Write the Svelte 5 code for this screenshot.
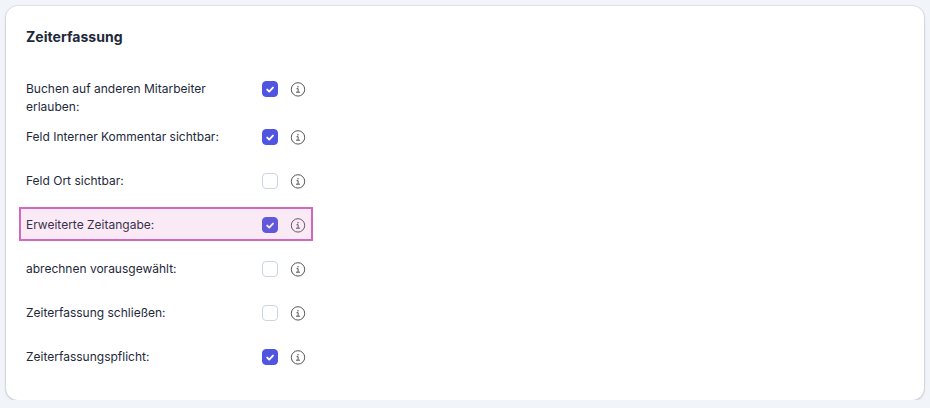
<script lang="ts">
	/**
	 * Settings card for time tracking ("Zeiterfassung")
	 */

	interface Setting {
		id: string;
		label: string;
		checked: boolean;
		highlighted?: boolean;
	}

	let settings = $state<Setting[]>([
		{ id: 'book-for-others', label: 'Buchen auf anderen Mitarbeiter erlauben:', checked: true },
		{ id: 'internal-comment', label: 'Feld Interner Kommentar sichtbar:', checked: true },
		{ id: 'location', label: 'Feld Ort sichtbar:', checked: false },
		{ id: 'extended-time', label: 'Erweiterte Zeitangabe:', checked: true, highlighted: true },
		{ id: 'billable', label: 'abrechnen vorausgewählt:', checked: false },
		{ id: 'close', label: 'Zeiterfassung schließen:', checked: false },
		{ id: 'required', label: 'Zeiterfassungspflicht:', checked: true }
	]);
</script>

<section class="card">
	<h2>Zeiterfassung</h2>

	{#each settings as setting (setting.id)}
		<div class="row" class:highlighted={setting.highlighted}>
			<label for={setting.id}>{setting.label}</label>
			<span class="checkbox">
				<input type="checkbox" id={setting.id} bind:checked={setting.checked} />
				{#if setting.checked}
					<svg class="check" viewBox="0 0 16 16" aria-hidden="true">
						<path d="M5.2 8.6l2 2L11 6.6" />
					</svg>
				{/if}
			</span>
			<svg class="info" viewBox="0 0 16 16" aria-hidden="true">
				<circle cx="8" cy="8.4" r="6.7" />
				<path d="M6.5 7.7h1.6v3.4M6 11.2h4" />
				<circle class="dot" cx="8" cy="5.8" r="0.75" />
			</svg>
		</div>
	{/each}
</section>

<style>
	:global(body) {
		background: #f1f5f9;
	}

	.card {
		box-sizing: border-box;
		height: 394px;
		margin: 6px 6px 0;
		padding: 21px 20px 0;
		background: #fff;
		border-radius: 12px;
		box-shadow:
			0 0 0 1px rgba(15, 23, 42, 0.06),
			0 1px 3px rgba(15, 23, 42, 0.18);
		color: #1e293b;
		font-family: Inter, sans-serif;
	}

	h2 {
		margin: 0 0 32px;
		font-size: 14px;
		font-weight: 700;
		line-height: 20px;
		letter-spacing: 0.03px;
	}

	.row {
		position: relative;
		display: flex;
		align-items: flex-start;
		min-height: 44px;
	}

	label {
		width: 200px;
		margin-right: 36px;
		padding: 1px 0 11px;
		font-size: 12px;
		line-height: 18px;
	}

	.checkbox {
		position: relative;
		width: 16px;
		height: 16px;
		margin: 2px 12px 0 0;
	}

	input {
		display: block;
		width: 16px;
		height: 16px;
		box-sizing: border-box;
		margin: 0;
		appearance: none;
		background: #fff;
		border: 1px solid #cbd5e1;
		border-radius: 4px;
	}

	input:checked {
		background: #4f55e0;
		border-color: #4f55e0;
	}

	.check {
		position: absolute;
		inset: 0;
		fill: none;
		stroke: #fff;
		stroke-width: 1.9;
		stroke-linecap: round;
		stroke-linejoin: round;
		pointer-events: none;
	}

	.info {
		width: 16px;
		height: 16px;
		margin-top: 2px;
		fill: none;
		stroke: #555;
		stroke-width: 1;
	}

	.info .dot {
		fill: #555;
		stroke: none;
	}

	/* marker lies over the row, so it tints the controls too */
	.highlighted::after {
		content: '';
		position: absolute;
		top: -8px;
		left: -7px;
		width: 290px;
		height: 30px;
		background: rgba(210, 104, 187, 0.14);
		border: 2px solid #d268bb;
		pointer-events: none;
	}
</style>
